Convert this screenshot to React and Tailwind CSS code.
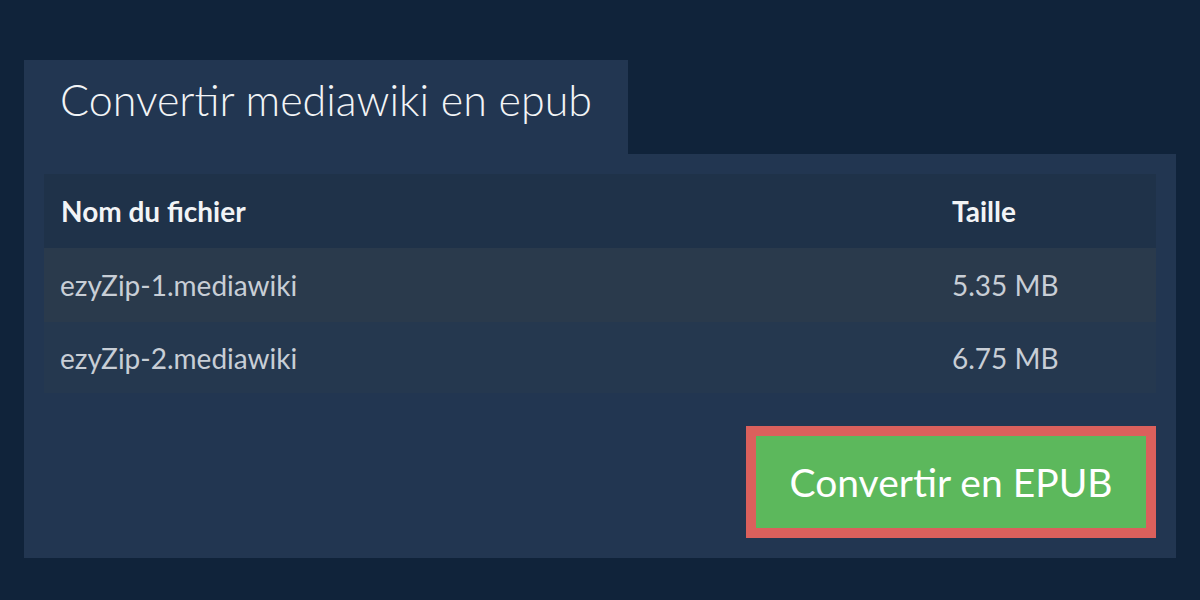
export default function App() {
  const files = [
    { name: 'ezyZip-1.mediawiki', size: '5.35 MB', bg: 'bg-[#2a3a4c]' },
    { name: 'ezyZip-2.mediawiki', size: '6.75 MB', bg: 'bg-[#25384f]' },
  ];

  return (
    <div className="w-[1200px] h-[600px] bg-[#10233a] pl-6 pt-[60px] font-['Lato','Liberation_Sans',sans-serif]">
      <div className="w-[604px] h-[94px] bg-[#223651] pl-9 pt-3">
        <h1 className="text-[43px] leading-[56px] font-light text-[#f2f4f6]">Convertir mediawiki en epub</h1>
      </div>
      <div className="w-[1152px] h-[404px] bg-[#223651] p-5">
        <div className="flex h-[74px] items-center bg-[#1f3249] text-[28px] font-bold text-[#f2f4f6]">
          <div className="flex-1 pl-[17px]">Nom du fichier</div>
          <div className="w-[221px] pl-[17px]">Taille</div>
        </div>
        {files.map((f, i) => (
          <div
            key={f.name}
            className={`flex items-center ${f.bg} text-[28px] text-[#c8ced6] ${i === 0 ? 'h-[74px]' : 'h-[71px]'}`}
          >
            <div className="flex-1 pl-[16px]">{f.name}</div>
            <div className="w-[221px] pl-[17px]">{f.size}</div>
          </div>
        ))}
        <div className="flex justify-end pt-[33px]">
          <button
            type="button"
            className="w-[410px] h-[112px] border-[10px] border-[#db605c] bg-[#5cb85c] text-[39px] font-normal text-white"
          >
            Convertir en EPUB
          </button>
        </div>
      </div>
    </div>
  );
}
